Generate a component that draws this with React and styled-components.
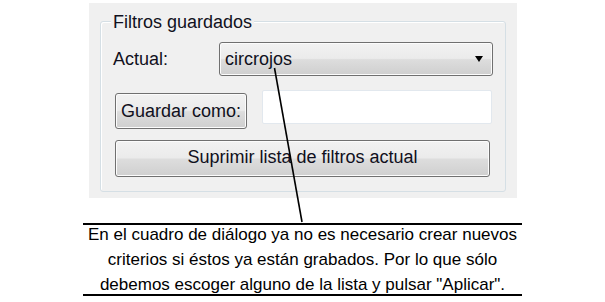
import React from "react";
import styled, { createGlobalStyle } from "styled-components";

const GlobalStyle = createGlobalStyle`
  html, body {
    margin: 0;
    padding: 0;
    background: #fff;
  }
  body {
    font-family: "Liberation Sans", Arial, sans-serif;
  }
`

const Page = styled.div`
  position: relative;
  width: 605px;
  height: 302px;
  overflow: hidden;
  background: #fff;
`

const Panel = styled.div`
  margin: 3px 0 0 89px;
  width: 428px;
  height: 195px;
  padding: 18px 11px 0 11px;
  box-sizing: border-box;
  background: #f0f0f0;
`

const GroupBox = styled.div`
  position: relative;
  width: 406px;
  height: 171px;
  box-sizing: border-box;
  border: 1px solid #d5dfe5;
  border-radius: 3px;
  padding: 20px 0 0 12px;
  box-shadow: inset 1px 1px 0 #fff;
`

const Legend = styled.span`
  position: absolute;
  top: -10px;
  left: 10px;
  padding: 0 2px;
  background: #f0f0f0;
  font-size: 18px;
  line-height: 20px;
  color: #101020;
`

const Row = styled.div`
  display: flex;
  align-items: ${({ $align }) => $align || "center"};
  margin-top: ${({ $top }) => $top || 0}px;
`

const Label = styled.span`
  width: 106px;
  font-size: 18px;
  color: #101020;
`

const Combo = styled.div`
  position: relative;
  display: flex;
  align-items: center;
  width: 274px;
  height: 34px;
  box-sizing: border-box;
  padding-left: 5px;
  border: 1px solid #707070;
  border-radius: 3px;
  background: linear-gradient(#f2f2f2 0%, #ebebeb 48%, #dddddd 52%, #cfcfcf 100%);
  box-shadow: inset 0 0 0 1px #fcfcfc;
  font-size: 18px;
  color: #101020;
`

const Arrow = styled.span`
  position: absolute;
  right: 9px;
  top: 13px;
  width: 0;
  height: 0;
  border-left: 4px solid transparent;
  border-right: 4px solid transparent;
  border-top: 6px solid #000;
`

const Button = styled.button`
  width: ${({ $w }) => $w}px;
  height: ${({ $h }) => $h}px;
  margin: ${({ $m }) => $m || "0"};
  padding: 0 0 ${({ $pb }) => $pb || 0}px 0;
  box-sizing: border-box;
  border: 1px solid #707070;
  border-radius: 3px;
  background: linear-gradient(#f2f2f2 0%, #ebebeb 48%, #dddddd 52%, #cfcfcf 100%);
  box-shadow: inset 0 0 0 1px #fcfcfc;
  font-family: "Liberation Sans", Arial, sans-serif;
  font-size: 18px;
  color: #101020;
  white-space: nowrap;
`

const TextInput = styled.div`
  width: 230px;
  height: 34px;
  margin-left: 15px;
  box-sizing: border-box;
  border: 1px solid #e2e8ee;
  border-radius: 2px;
  background: #fff;
`

const Note = styled.div`
  margin: 25px 0 0 83px;
  width: 439px;
  border-top: 2px solid #000;
  border-bottom: 2px solid #000;
`

const NoteText = styled.p`
  margin: -3px 0;
  font-size: 17px;
  line-height: 25px;
  text-align: center;
  color: #000;
`

const Pointer = styled.svg`
  position: absolute;
  left: 0;
  top: 0;
  pointer-events: none;
`

export default function App() {
  return (
    <Page>
      <GlobalStyle />
      <Panel>
        <GroupBox>
          <Legend>Filtros guardados</Legend>
          <Row>
            <Label>Actual:</Label>
            <Combo>
              circrojos
              <Arrow />
            </Combo>
          </Row>
          <Row $align="flex-start" $top={14}>
            <Button $w={132} $h={36} $m="3px 0 0 2px">Guardar como:</Button>
            <TextInput />
          </Row>
          <Row $top={11}>
            <Button $w={375} $h={37} $m="0 0 0 2px" $pb={3}>
              Suprimir lista de filtros actual
            </Button>
          </Row>
        </GroupBox>
      </Panel>
      <Note>
        <NoteText>
          En el cuadro de diálogo ya no es necesario crear nuevos<br />
          criterios si éstos ya están grabados. Por lo que sólo<br />
          debemos escoger alguno de la lista y pulsar "Aplicar".
        </NoteText>
      </Note>
      <Pointer width="605" height="302">
        <line x1="274.5" y1="68" x2="302" y2="222" stroke="#000" strokeWidth="1.6" />
      </Pointer>
    </Page>
  );
}
